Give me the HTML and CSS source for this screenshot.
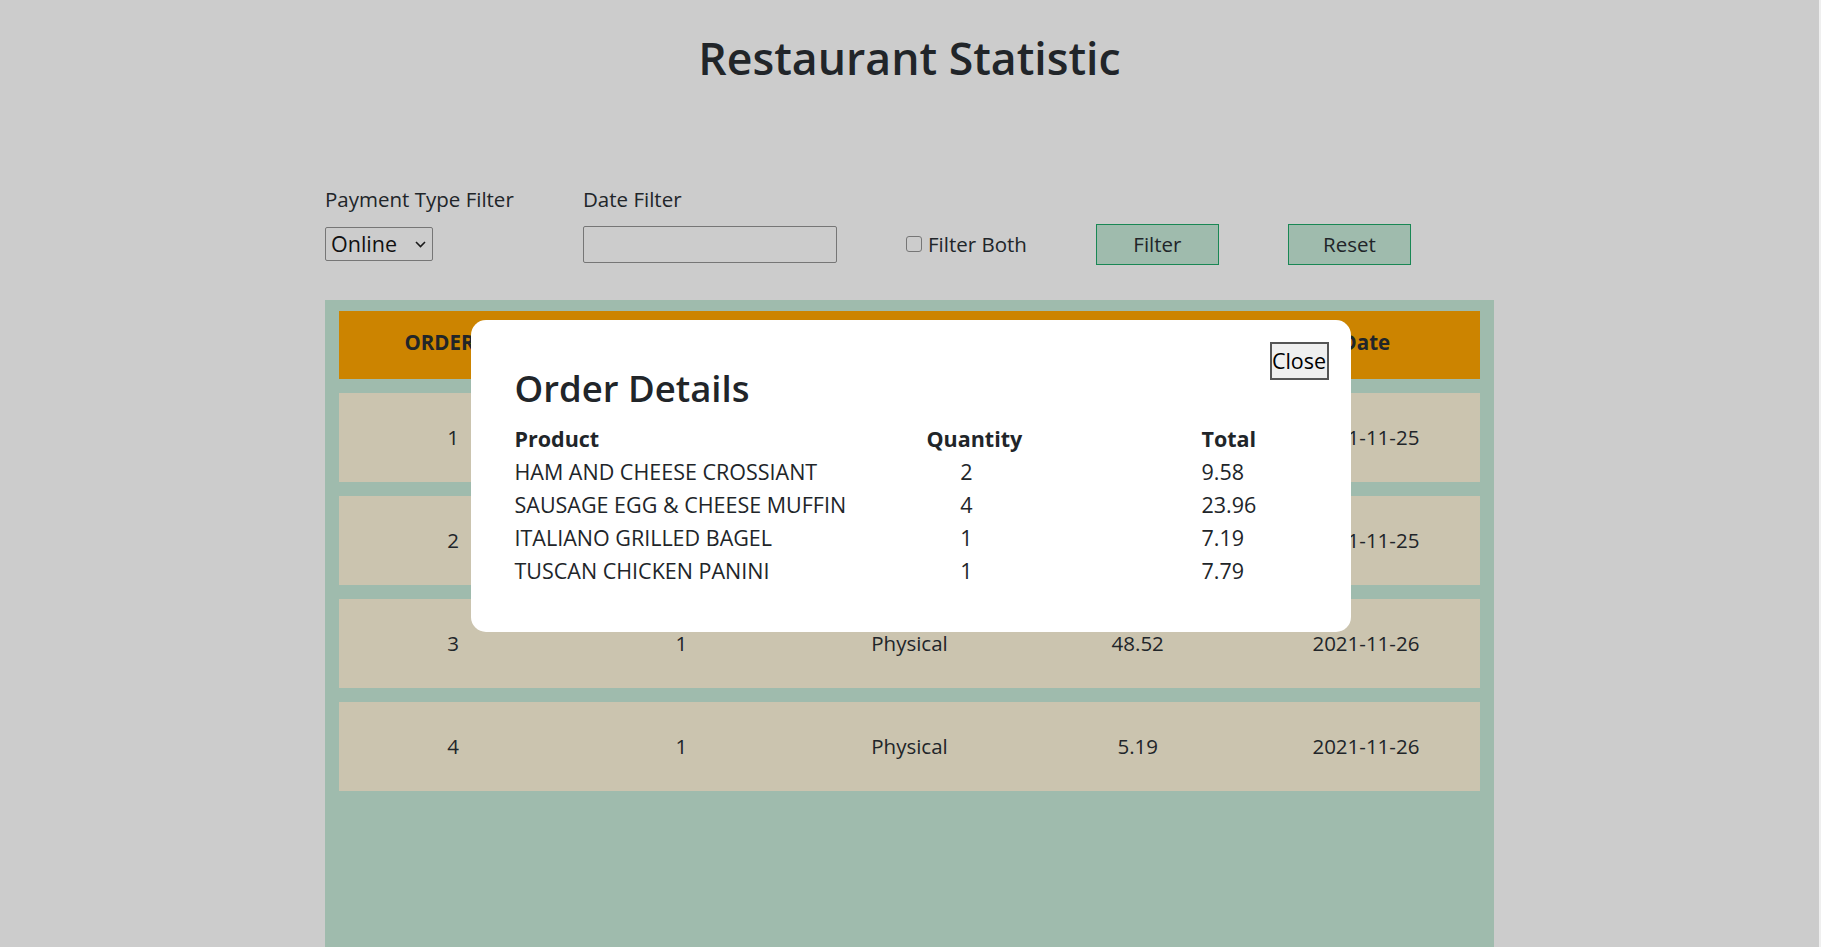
FILE: index.html
```html
<!DOCTYPE html>
<html lang="en">
<head>
<meta charset="utf-8">
<title>Restaurant Statistic</title>
<link rel="stylesheet" href="styles.css">
</head>
<body>
<div class="page">
  <h1 class="title">Restaurant Statistic</h1>

  <div class="filters">
    <div class="filter-group group-payment">
      <label class="filter-label" for="payment">Payment Type Filter</label>
      <div class="control">
        <div class="select-wrap">
          <select id="payment" class="select">
            <option>Online</option>
            <option>Physical</option>
          </select>
          <svg class="select-arrow" width="11" height="7" viewBox="0 0 11 7"><path d="M1 1l4.5 4.5L10 1" fill="none" stroke="#1a1a1a" stroke-width="1.6"/></svg>
        </div>
      </div>
    </div>
    <div class="filter-group">
      <label class="filter-label" for="date">Date Filter</label>
      <div class="control">
        <input id="date" class="date-input" type="text">
      </div>
    </div>
    <div class="filter-group">
      <div class="control">
        <label class="check"><input type="checkbox" class="checkbox">Filter Both</label>
      </div>
    </div>
    <div class="filter-group">
      <div class="control"><button class="btn">Filter</button></div>
    </div>
    <div class="filter-group">
      <div class="control"><button class="btn">Reset</button></div>
    </div>
  </div>

  <div class="orders">
    <div class="orders-head">
      <div>ORDER ID</div>
      <div>STORE ID</div>
      <div>Payment Type</div>
      <div>Total</div>
      <div>Date</div>
    </div>
    <div class="orders-row">
      <div>1</div><div>1</div><div>Online</div><div>38.52</div><div>2021-11-25</div>
    </div>
    <div class="orders-row">
      <div>2</div><div>1</div><div>Online</div><div>12.40</div><div>2021-11-25</div>
    </div>
    <div class="orders-row">
      <div>3</div><div>1</div><div>Physical</div><div>48.52</div><div>2021-11-26</div>
    </div>
    <div class="orders-row">
      <div>4</div><div>1</div><div>Physical</div><div>5.19</div><div>2021-11-26</div>
    </div>
  </div>
</div>

<div class="modal">
  <button class="modal-close">Close</button>
  <h2 class="modal-title">Order Details</h2>
  <table class="details">
    <colgroup>
      <col class="col-product">
      <col class="col-qty">
      <col>
    </colgroup>
    <thead>
      <tr><th>Product</th><th>Quantity</th><th>Total</th></tr>
    </thead>
    <tbody>
      <tr><td>HAM AND CHEESE CROSSIANT</td><td><span class="qty">2</span></td><td>9.58</td></tr>
      <tr><td>SAUSAGE EGG &amp; CHEESE MUFFIN</td><td><span class="qty">4</span></td><td>23.96</td></tr>
      <tr><td>ITALIANO GRILLED BAGEL</td><td><span class="qty">1</span></td><td>7.19</td></tr>
      <tr><td>TUSCAN CHICKEN PANINI</td><td><span class="qty">1</span></td><td>7.79</td></tr>
    </tbody>
  </table>
</div>
</body>
</html>
```

FILE: styles.css
```css
html {
  height: 100%;
  border-right: 2px solid #efefef;
}

body {
  margin: 0;
  height: 100%;
  overflow: hidden;
  background: #cccccc;
  color: #212529;
  font-family: "Open Sans", "Noto Sans", sans-serif;
  font-size: 20.5px;
  line-height: 1.5;
}

.page {
  width: 1169px;
  margin: 0 auto;
  min-height: 100vh;
  display: flex;
  flex-direction: column;
}

.title {
  margin: 31px 0 0;
  text-align: center;
  font-size: 44.6px;
  font-weight: 550;
  line-height: 1.2;
}

/* filters */
.filters {
  display: flex;
  align-items: flex-end;
  gap: 69px;
  margin-top: 99px;
}

.filter-group {
  display: flex;
  flex-direction: column;
  gap: 9px;
}

.group-payment {
  width: 189px;
}

.filter-label {
  line-height: 31px;
  white-space: nowrap;
}

.control {
  height: 41px;
  display: flex;
  align-items: center;
}

.select-wrap {
  position: relative;
  width: 108px;
  height: 34px;
}

.select {
  appearance: none;
  -webkit-appearance: none;
  width: 100%;
  height: 100%;
  box-sizing: border-box;
  margin: 0;
  padding: 0 0 0 5px;
  border: 1px solid #767676;
  border-radius: 2px;
  background: transparent;
  color: #111;
  font: inherit;
  font-size: 21.5px;
  line-height: 32px;
}

.select-arrow {
  position: absolute;
  right: 7px;
  top: 14px;
  pointer-events: none;
}

.date-input {
  width: 254px;
  height: 37px;
  box-sizing: border-box;
  margin: 0;
  border: 1px solid #767676;
  border-radius: 2px;
  background: transparent;
  font: inherit;
}

.check {
  display: flex;
  align-items: center;
  gap: 6px;
  white-space: nowrap;
}

.checkbox {
  appearance: none;
  -webkit-appearance: none;
  width: 16px;
  height: 16px;
  margin: 0;
  border: 1px solid #767676;
  border-radius: 3px;
  background: transparent;
}

.btn {
  width: 123px;
  height: 41px;
  margin: 0;
  padding: 0;
  border: 1px solid #198754;
  background: #9fbbad;
  color: #212529;
  font: inherit;
}

/* orders table */
.orders {
  flex: 1;
  margin-top: 35px;
  padding: 11px 14px;
  background: #9fbbad;
  display: flex;
  flex-direction: column;
  gap: 14px;
}

.orders-head,
.orders-row {
  display: grid;
  grid-template-columns: repeat(5, 1fr);
  text-align: center;
  line-height: 30px;
}

.orders-head {
  height: 68px;
  box-sizing: border-box;
  padding-top: 16px;
  background: #cc8400;
  font-weight: 700;
}

.orders-row {
  padding: 29.5px 0;
  background: #cbc4af;
}

/* modal */
.modal {
  position: fixed;
  inset: 4px 0 0 0;
  margin: auto;
  width: 880px;
  height: fit-content;
  box-sizing: border-box;
  padding: 44px 22px 45px 44px;
  background: #ffffff;
  border-radius: 15px;
}

.modal-close {
  position: absolute;
  top: 22px;
  right: 22px;
  width: 59px;
  height: 38px;
  padding: 0;
  border: 2px solid #555555;
  background: #efefef;
  color: #000;
  font: inherit;
  font-size: 21.5px;
  line-height: 1;
}

.modal-title {
  margin: 0 0 10px;
  font-size: 36.5px;
  font-weight: 550;
  line-height: 48px;
}

.details {
  border-collapse: collapse;
  font-size: 21.5px;
  line-height: 33px;
}

.col-product {
  width: 412px;
}

.col-qty {
  width: 275px;
}

.details th,
.details td {
  padding: 0;
  text-align: left;
  white-space: nowrap;
}

.details th {
  font-weight: 700;
}

.qty {
  display: inline-block;
  width: 80px;
  text-align: center;
}
```
